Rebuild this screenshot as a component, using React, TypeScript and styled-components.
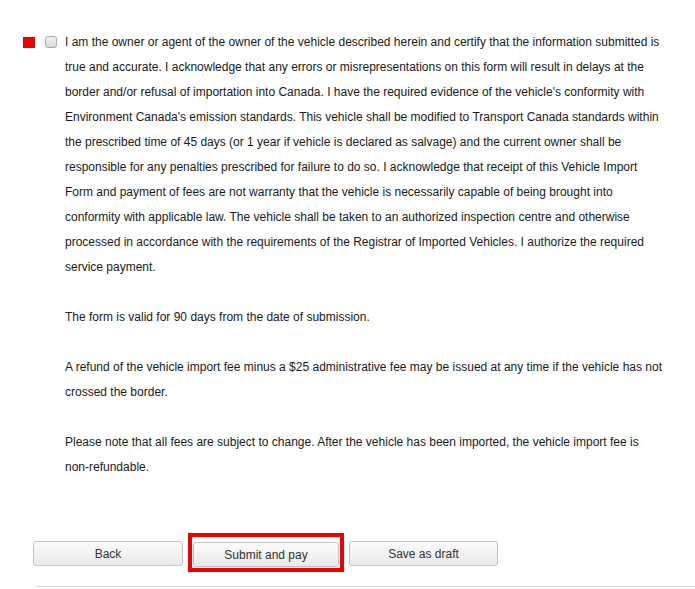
import React, { useState } from 'react';
import styled, { createGlobalStyle } from 'styled-components';

const GlobalStyle = createGlobalStyle`
  body {
    margin: 0;
    background: #ffffff;
    font-family: "Liberation Sans", Arial, sans-serif;
  }
`;

const Page = styled.div`
  width: 695px;
  padding-top: 30px;
`;

const ConsentRow = styled.div`
  display: flex;
  align-items: flex-start;
  padding-left: 23px;
`;

const RequiredMark = styled.span`
  flex: none;
  width: 12px;
  height: 11px;
  margin-top: 7px;
  background: #ee0000;
`;

const CheckBox = styled.input`
  appearance: none;
  flex: none;
  width: 12px;
  height: 12px;
  margin: 6px 8px 0 10px;
  border: 1px solid #a9a9a9;
  border-radius: 3px;
  background: linear-gradient(#f4f4f4, #d8d8d8);
  cursor: pointer;

  &:checked {
    background: linear-gradient(#e8f2ff, #c4dcf7);
  }
`;

const Statement = styled.div`
  width: 600px;
  font-size: 12px;
  line-height: 25px;
  color: #1a1a1a;
`;

const Paragraph = styled.p`
  margin: 0 0 25px;

  &:last-child {
    margin-bottom: 0;
  }
`;

const Actions = styled.div`
  display: flex;
  align-items: flex-end;
  gap: 5px;
  margin-top: 53px;
  padding-left: 33px;
`;

const Button = styled.button<{ $width?: number }>`
  width: ${(p) => p.$width ?? 150}px;
  height: 25px;
  padding: 0;
  border: 1px solid #c4c4c4;
  border-radius: 3px;
  background: linear-gradient(#fbfbfb, #e9e9e9);
  color: #333;
  font-family: "Liberation Sans", Arial, sans-serif;
  font-size: 12px;
  cursor: pointer;
`;

const Highlight = styled.span`
  display: inline-flex;
  border: 4px solid #ee0000;
  padding: 5px 1px 1px 1px;
  margin-bottom: -6px;
`;

const Divider = styled.hr`
  margin: 20px 0 0 36px;
  border: none;
  border-top: 1px solid #d6d6d6;
`;

const paragraphs = [
  "I am the owner or agent of the owner of the vehicle described herein and certify that the information submitted is true and accurate. I acknowledge that any errors or misrepresentations on this form will result in delays at the border and/or refusal of importation into Canada. I have the required evidence of the vehicle's conformity with Environment Canada's emission standards. This vehicle shall be modified to Transport Canada standards within the prescribed time of 45 days (or 1 year if vehicle is declared as salvage) and the current owner shall be responsible for any penalties prescribed for failure to do so. I acknowledge that receipt of this Vehicle Import Form and payment of fees are not warranty that the vehicle is necessarily capable of being brought into conformity with applicable law. The vehicle shall be taken to an authorized inspection centre and otherwise processed in accordance with the requirements of the Registrar of Imported Vehicles. I authorize the required service payment.",
  'The form is valid for 90 days from the date of submission.',
  'A refund of the vehicle import fee minus a $25 administrative fee may be issued at any time if the vehicle has not crossed the border.',
  'Please note that all fees are subject to change. After the vehicle has been imported, the vehicle import fee is non-refundable.',
];

const App: React.FC = () => {
  const [agreed, setAgreed] = useState(false);

  return (
    <Page>
      <GlobalStyle />
      <ConsentRow>
        <RequiredMark />
        <CheckBox type="checkbox" checked={agreed} onChange={() => setAgreed(!agreed)} />
        <Statement>
          {paragraphs.map((text, i) => (
            <Paragraph key={i}>{text}</Paragraph>
          ))}
        </Statement>
      </ConsentRow>

      <Actions>
        <Button>Back</Button>
        <Highlight>
          <Button $width={146}>Submit and pay</Button>
        </Highlight>
        <Button $width={149}>Save as draft</Button>
      </Actions>

      <Divider />
    </Page>
  );
};

export default App;
